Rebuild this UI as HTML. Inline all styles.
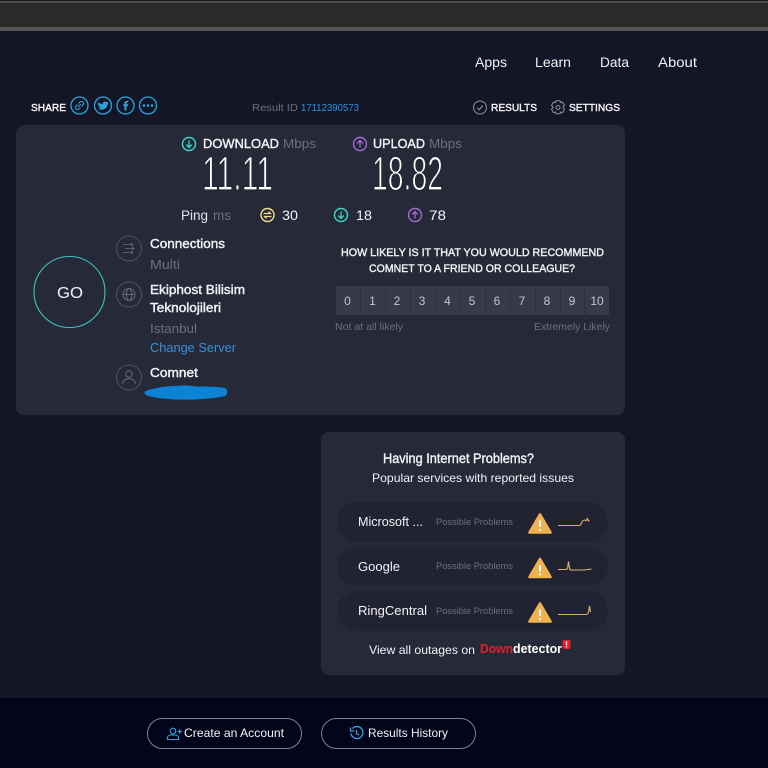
<!DOCTYPE html>
<html><head><meta charset="utf-8">
<style>
html,body{margin:0;padding:0;width:768px;height:768px;overflow:hidden;background:#141526}
svg{display:block;filter:blur(.3px)}
text{font-family:"Liberation Sans",sans-serif;fill:#fff}
.w{fill:#f2f2f6}
.g{fill:#6d6f80}
.b{fill:#1c9ce8}
.s{stroke:#f2f2f6;stroke-width:.4px}
</style></head><body>
<svg width="768" height="768" viewBox="0 0 768 768" xmlns="http://www.w3.org/2000/svg">
<defs>
<g id="dn"><circle r="6.500" fill="none" stroke="#3fd8c4" stroke-width="1.400"/><path d="M0-3.500V3.200M-2.800 .6 0 3.400 2.800 .6" fill="none" stroke="#3fd8c4" stroke-width="1.300"/></g>
<g id="up"><circle r="6.500" fill="none" stroke="#a669d6" stroke-width="1.400"/><path d="M0 3.500V-3.200M-2.800-.6 0-3.400 2.800-.6" fill="none" stroke="#a669d6" stroke-width="1.300"/></g>
<g id="warn"><path d="M0-9.500 10.500 8.500H-10.500Z" fill="#f0b14f" stroke="#f0b14f" stroke-width="2.600" stroke-linejoin="round"/><path d="M0-3.600V3" stroke="#fff" stroke-width="2"/><circle cy="6" r="1.100" fill="#fff"/></g>
</defs>

<rect width="768" height="768" fill="#141526"/>
<rect width="768" height="31" fill="#2a2a2a"/>
<rect width="768" height="1" fill="#1d1d1d"/>
<rect y="1" width="768" height="2" fill="#4c4c4c"/>
<rect y="27" width="768" height="4" fill="#565656"/>
<rect y="698" width="768" height="70" fill="#04041b"/>

<!-- nav -->
<text class="w" x="475" y="67" font-size="14" textLength="32" lengthAdjust="spacingAndGlyphs">Apps</text>
<text class="w" x="535" y="67" font-size="14" textLength="36" lengthAdjust="spacingAndGlyphs">Learn</text>
<text class="w" x="600" y="67" font-size="14" textLength="29" lengthAdjust="spacingAndGlyphs">Data</text>
<text class="w" x="658" y="67" font-size="14" textLength="39" lengthAdjust="spacingAndGlyphs">About</text>

<!-- share -->
<text class="w s" x="31" y="111" font-size="10.500" textLength="35" lengthAdjust="spacingAndGlyphs">SHARE</text>
<g fill="none" stroke="#2aa5dc" stroke-width="1.300">
<circle cx="79.500" cy="105.500" r="8.500"/><circle cx="103" cy="105.500" r="8.500"/><circle cx="125.500" cy="105.500" r="8.500"/><circle cx="148" cy="105.500" r="8.500"/>
<path d="M78.500 103.500l1.500-1.500a2.100 2.100 0 0 1 3 3l-1.500 1.500M80.500 107.500l-1.500 1.500a2.100 2.100 0 0 1-3-3l1.500-1.500M78 107l3-3" stroke-width="1.100"/>
</g>
<path d="M98 102c1.500 1.500 3 2.200 4.800 2.300-.3-2.500 2.700-3.700 4.200-2l1.500-.5-.9 1.400 1-.2-1 1.100c0 4-4.500 7.200-9.800 4.600 1.300 0 2.300-.3 3-1-1.300-.3-2-1-2.400-1.900h1.200c-1.300-.6-2-1.500-2-2.700l1.200.3c-1-.7-1.300-2-.8-3.400z" fill="#2aa5dc"/>
<path d="M126.500 110.500v-4.500h1.500l.3-1.700h-1.800v-1c0-.6.2-.9.9-.9h.9v-1.500h-1.500c-1.500 0-2.300.9-2.300 2.300v1.100h-1.300v1.700h1.300v4.500z" fill="#2aa5dc"/>
<g fill="#2aa5dc"><circle cx="144" cy="105.500" r="1.300"/><circle cx="148" cy="105.500" r="1.300"/><circle cx="152" cy="105.500" r="1.300"/></g>

<text class="g" x="252" y="111" font-size="10.500" textLength="46" lengthAdjust="spacingAndGlyphs">Result ID</text>
<text x="301" y="111" font-size="10.500" textLength="58" lengthAdjust="spacingAndGlyphs" style="fill:#2c93e0">17112390573</text>

<circle cx="480" cy="107.500" r="6.500" fill="none" stroke="#8f909c" stroke-width="1"/>
<path d="M477.200 107.800l2 2 3.600-4.200" fill="none" stroke="#a0a1ac" stroke-width="1"/>
<text class="w s" x="491" y="111" font-size="10.500" textLength="46" lengthAdjust="spacingAndGlyphs">RESULTS</text>
<circle cx="558" cy="107.500" r="2" fill="none" stroke="#8f909c"/>
<path d="M556 100.800h4l.6 1.800 1.900-.6 2 3.400-1.400 1.300v1.200l1.400 1.300-2 3.400-1.900-.6-.6 1.800h-4l-.6-1.800-1.900.6-2-3.400 1.400-1.300v-1.200l-1.400-1.300 2-3.400 1.900.6z" fill="none" stroke="#8f909c" stroke-width="1"/>
<text class="w s" x="569" y="111" font-size="10.500" textLength="51" lengthAdjust="spacingAndGlyphs">SETTINGS</text>

<!-- main card -->
<rect x="16" y="125" width="609" height="290" rx="8" fill="#262938"/>

<use href="#dn" x="189" y="144"/>
<text class="w s" x="203" y="148" font-size="13" textLength="76" lengthAdjust="spacingAndGlyphs">DOWNLOAD</text>
<text class="g" x="283" y="148" font-size="13" textLength="33" lengthAdjust="spacingAndGlyphs">Mbps</text>
<use href="#up" x="360" y="144"/>
<text class="w s" x="373" y="148" font-size="13" textLength="52" lengthAdjust="spacingAndGlyphs">UPLOAD</text>
<text class="g" x="429" y="148" font-size="13" textLength="33" lengthAdjust="spacingAndGlyphs">Mbps</text>

<text x="202" y="190" font-size="48" textLength="71" lengthAdjust="spacingAndGlyphs" style="stroke:#262938;stroke-width:1.300px;fill:#fff">11.11</text>
<text x="372" y="190" font-size="48" textLength="71" lengthAdjust="spacingAndGlyphs" style="stroke:#262938;stroke-width:1.300px;fill:#fff">18.82</text>

<text x="181" y="220" font-size="13.500" textLength="27" lengthAdjust="spacingAndGlyphs" style="fill:#e2e2ea">Ping</text>
<text class="g" x="213" y="220" font-size="13.500" textLength="18" lengthAdjust="spacingAndGlyphs">ms</text>
<circle cx="267.500" cy="215" r="6.500" fill="none" stroke="#f0dc90" stroke-width="1.400"/>
<path d="M263.500 213.500h7l-2-2M271.500 216.500h-7l2 2" fill="none" stroke="#f0dc90" stroke-width="1.200"/>
<text class="w" x="282" y="220" font-size="13.500" textLength="16" lengthAdjust="spacingAndGlyphs">30</text>
<use href="#dn" x="341" y="215"/>
<text class="w" x="356" y="220" font-size="13.500" textLength="16" lengthAdjust="spacingAndGlyphs">18</text>
<use href="#up" x="415" y="215"/>
<text class="w" x="429" y="220" font-size="13.500" textLength="17" lengthAdjust="spacingAndGlyphs">78</text>

<!-- GO -->
<circle cx="69.500" cy="292" r="35.500" fill="none" stroke="#3cc5c0" stroke-width="1.100"/>
<text class="w" x="57" y="298" font-size="16" textLength="26" lengthAdjust="spacingAndGlyphs">GO</text>

<!-- left icons -->
<g fill="none" stroke="#4d5062" stroke-width="1">
<circle cx="129" cy="248.500" r="12.500"/><circle cx="129" cy="294.500" r="12.500"/><circle cx="129" cy="377.500" r="12.500"/>
<path d="M123 244.500h9M125 248.500h8M123 252.500h9M131 243l2 1.500-2 1.500M132 247l2 1.500-2 1.500M131 251l2 1.500-2 1.500" stroke="#6a6d7e" stroke-width=".8"/>
<circle cx="129" cy="294.500" r="6" stroke="#666979"/><ellipse cx="129" cy="294.500" rx="2.600" ry="6" stroke="#666979"/><path d="M123 294.500h12" stroke="#666979"/>
<circle cx="129" cy="374" r="3.200" stroke="#666979"/><path d="M122.500 384c.5-3.600 3-5.200 6.500-5.200s6 1.600 6.500 5.200" stroke="#666979"/>
</g>

<text class="w s" x="150" y="248" font-size="12.500" textLength="75" lengthAdjust="spacingAndGlyphs">Connections</text>
<text class="g" x="150" y="269" font-size="12.500" textLength="30" lengthAdjust="spacingAndGlyphs">Multi</text>
<text class="w s" x="150" y="294" font-size="12.500" textLength="95" lengthAdjust="spacingAndGlyphs">Ekiphost Bilisim</text>
<text class="w s" x="150" y="312" font-size="12.500" textLength="71" lengthAdjust="spacingAndGlyphs">Teknolojileri</text>
<text class="g" x="150" y="333" font-size="12.500" textLength="47" lengthAdjust="spacingAndGlyphs">Istanbul</text>
<text x="150" y="352" font-size="12.500" textLength="86" lengthAdjust="spacingAndGlyphs" style="fill:#3b8fd6">Change Server</text>
<text class="w s" x="150" y="377" font-size="12.500" textLength="48" lengthAdjust="spacingAndGlyphs">Comnet</text>
<path d="M146 391c8-3 20-5 30-5 6-.8 14-.8 20 .5 10 0 22 0 29 1.500 3 1.500 3 6 0 8-8 2-20 3-30 3.500-16 .5-34 0-48-4-3-1.500-3.500-3.500-1-4.500z" fill="#0d83d6"/>

<!-- survey -->
<text class="w s" x="341" y="256" font-size="11" textLength="263" lengthAdjust="spacingAndGlyphs">HOW LIKELY IS IT THAT YOU WOULD RECOMMEND</text>
<text class="w s" x="369" y="272" font-size="11" textLength="206" lengthAdjust="spacingAndGlyphs">COMNET TO A FRIEND OR COLLEAGUE?</text>
<rect x="336" y="286" width="273" height="29" rx="2" fill="#2d303e"/>
<g fill="#373a49">
<rect x="336" y="286" width="24" height="29" rx="2"/><rect x="361" y="286" width="24" height="29"/><rect x="386" y="286" width="24" height="29"/><rect x="411" y="286" width="24" height="29"/><rect x="436" y="286" width="24" height="29"/><rect x="461" y="286" width="24" height="29"/><rect x="486" y="286" width="24" height="29"/><rect x="511" y="286" width="24" height="29"/><rect x="536" y="286" width="24" height="29"/><rect x="561" y="286" width="23" height="29"/><rect x="585" y="286" width="24" height="29" rx="2"/>
</g>
<text x="347.500" y="305" font-size="12" text-anchor="middle" style="fill:#c4c5ce">0</text><text x="372.500" y="305" font-size="12" text-anchor="middle" style="fill:#c4c5ce">1</text><text x="397" y="305" font-size="12" text-anchor="middle" style="fill:#c4c5ce">2</text><text x="422" y="305" font-size="12" text-anchor="middle" style="fill:#c4c5ce">3</text><text x="447.500" y="305" font-size="12" text-anchor="middle" style="fill:#c4c5ce">4</text><text x="472" y="305" font-size="12" text-anchor="middle" style="fill:#c4c5ce">5</text><text x="497" y="305" font-size="12" text-anchor="middle" style="fill:#c4c5ce">6</text><text x="522" y="305" font-size="12" text-anchor="middle" style="fill:#c4c5ce">7</text><text x="547" y="305" font-size="12" text-anchor="middle" style="fill:#c4c5ce">8</text><text x="572" y="305" font-size="12" text-anchor="middle" style="fill:#c4c5ce">9</text><text x="597" y="305" font-size="12" text-anchor="middle" style="fill:#c4c5ce">10</text>
<text class="g" x="335" y="330" font-size="10.500" textLength="68" lengthAdjust="spacingAndGlyphs">Not at all likely</text>
<text class="g" x="534" y="330" font-size="10.500" textLength="76" lengthAdjust="spacingAndGlyphs">Extremely Likely</text>

<!-- problems -->
<rect x="321" y="432" width="304" height="243" rx="8" fill="#262938"/>
<text class="w s" x="383" y="463" font-size="14" textLength="151" lengthAdjust="spacingAndGlyphs">Having Internet Problems?</text>
<text class="w" x="372" y="482" font-size="12" textLength="202" lengthAdjust="spacingAndGlyphs">Popular services with reported issues</text>

<rect x="337" y="502" width="271" height="40" rx="20" fill="#212333"/>
<rect x="337" y="547" width="271" height="39" rx="19.500" fill="#212333"/>
<rect x="337" y="591" width="271" height="40" rx="20" fill="#212333"/>

<text class="w" x="358" y="526" font-size="13" textLength="65" lengthAdjust="spacingAndGlyphs">Microsoft ...</text>
<text class="w" x="358" y="571" font-size="13" textLength="42" lengthAdjust="spacingAndGlyphs">Google</text>
<text class="w" x="358" y="615" font-size="13" textLength="69" lengthAdjust="spacingAndGlyphs">RingCentral</text>
<text class="g" x="436" y="525" font-size="9.500" textLength="77" lengthAdjust="spacingAndGlyphs">Possible Problems</text>
<text class="g" x="436" y="569" font-size="9.500" textLength="77" lengthAdjust="spacingAndGlyphs">Possible Problems</text>
<text class="g" x="436" y="614" font-size="9.500" textLength="77" lengthAdjust="spacingAndGlyphs">Possible Problems</text>
<use href="#warn" x="540" y="524"/>
<use href="#warn" x="540" y="568.500"/>
<use href="#warn" x="540" y="613"/>
<g fill="none" stroke="#d6b36c" stroke-width="1.100">
<path d="M558 525.500H579c1.500-.3 2-.8 3-3.500 .7-2 1.500-1.500 2.500-2 1 0 1.200 1.500 2 0l1-1.500 .8 2.500 1-1"/>
<path d="M558 569.500H566c1.400 0 1.500-.8 1.700-2l.8-6 1 7c.2 1.200 1 1.500 2 1.500H584l7.500-1"/>
<path d="M558 614.500H586c1.500 0 2-.5 2.500-2l1-6.500 1 6"/>
</g>
<text class="w" x="369" y="654" font-size="12" textLength="106" lengthAdjust="spacingAndGlyphs">View all outages on</text>
<text x="480" y="653" font-size="13" textLength="33" lengthAdjust="spacingAndGlyphs" style="fill:#e3202c;font-weight:bold">Down</text>
<text x="513" y="653" font-size="13" textLength="49" lengthAdjust="spacingAndGlyphs" style="font-weight:bold">detector</text>
<rect x="562.500" y="640" width="8" height="9" rx="2" fill="#e3202c"/>
<path d="M566.500 641.500v3.800M566.500 646.300v1.200" stroke="#fff" stroke-width="1.300"/>

<!-- footer -->
<rect x="147.500" y="718.500" width="154" height="30" rx="15" fill="none" stroke="#7f8092" stroke-width="1"/>
<rect x="321.500" y="718.500" width="154" height="30" rx="15" fill="none" stroke="#7f8092" stroke-width="1"/>
<g fill="none" stroke="#34a3dc" stroke-width="1.100">
<circle cx="173" cy="731" r="2.800"/><path d="M167.500 739.500v-1.500c0-2 1.500-3 3-3h5c1.500 0 3 1 3 3v1.500z"/><path d="M177.500 731.500h4.500M179.700 729.300v4.500"/>
<path d="M352.500 728.500a6 6 0 1 1-1.500 5M350.500 727.500v3.500h3.500M356.500 730v3.500l2.500 1.500" stroke-width="1.300"/>
</g>
<text class="w" x="184" y="737" font-size="12" textLength="100" lengthAdjust="spacingAndGlyphs">Create an Account</text>
<text class="w" x="368" y="737" font-size="12" textLength="80" lengthAdjust="spacingAndGlyphs">Results History</text>
</svg>
</body></html>
